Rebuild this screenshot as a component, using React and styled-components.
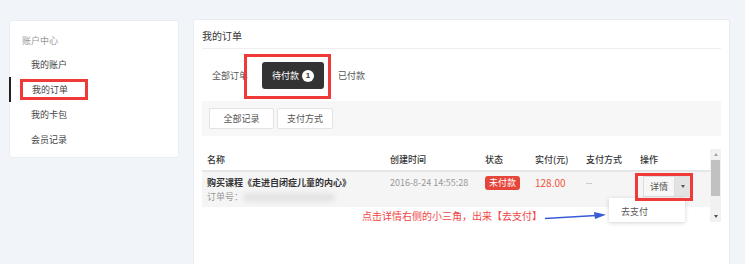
import React from "react";
import styled, { createGlobalStyle } from "styled-components";

const GlobalStyle = createGlobalStyle`
  html, body {
    margin: 0;
    padding: 0;
    background: #f1f4f8;
    overflow: hidden;
  }
  body {
    font-family: "Noto Sans CJK SC", "Liberation Sans", sans-serif;
    font-size: 9px;
    color: #555;
  }
`;

const Page = styled.div`
  display: flex;
  align-items: flex-start;
  gap: 14px;
  padding: 19px 0 0 9px;
  height: 264px;
  box-sizing: border-box;
  overflow: hidden;
`;

const Sidebar = styled.div`
  width: 170px;
  margin-top: 1px;
  padding-bottom: 5px;
  background: #fff;
  border: 1px solid #e9edf2;
  border-radius: 3px;
  box-sizing: border-box;
`;

const SideTitle = styled.div`
  padding: 10px 12px 0;
  height: 31px;
  line-height: 20px;
  color: #999;
  box-sizing: border-box;
`;

const SideItem = styled.div`
  position: relative;
  height: 25px;
  line-height: 25px;
  padding-left: ${(p) => (p.active ? "21px" : "22px")};
  border-left: ${(p) => (p.active ? "2px solid #222" : "none")};
  margin-left: -1px;
  color: #444;
`;

const Annot = styled.span`
  position: absolute;
  left: ${(p) => p.l}px;
  top: ${(p) => p.t}px;
  width: ${(p) => p.w}px;
  height: ${(p) => p.h}px;
  border: 3px solid #f03a3a;
  box-sizing: border-box;
  pointer-events: none;
  z-index: 5;
`;

const Main = styled.div`
  width: 537px;
  height: 245px;
  background: #fff;
  border: 1px solid #e9edf2;
  border-bottom: none;
  border-radius: 3px 3px 0 0;
  box-sizing: border-box;
  padding: 0 8px;
`;

const MainTitle = styled.div`
  padding: 8px 0 5px;
  line-height: 15px;
  font-size: 10px;
  color: #333;
  border-bottom: 1px solid #eee;
`;

const Tabs = styled.div`
  position: relative;
  display: flex;
  gap: 4px;
  margin: 13px 0 12px;
`;

const Tab = styled.div`
  display: flex;
  align-items: center;
  gap: 3px;
  height: 27px;
  padding: 0 10px;
  border-radius: 3px;
  background: ${(p) => (p.active ? "#333" : "transparent")};
  color: ${(p) => (p.active ? "#fff" : "#555")};
`;

const Count = styled.span`
  display: inline-flex;
  align-items: center;
  justify-content: center;
  width: 12px;
  height: 12px;
  border-radius: 50%;
  background: #fff;
  color: #333;
  font-size: 8px;
  font-weight: bold;
  font-family: "Liberation Sans", sans-serif;
`;

const FilterBar = styled.div`
  display: flex;
  gap: 3px;
  padding: 7px;
  background: #f7f7f7;
`;

const FilterBtn = styled.div`
  width: ${(p) => p.w}px;
  height: 21px;
  line-height: 20px;
  text-align: center;
  background: #fff;
  border: 1px solid #e3e3e3;
  border-radius: 2px;
  box-sizing: border-box;
  color: #555;
`;

const TableWrap = styled.div`
  position: relative;
  display: flex;
  margin-top: 13px;
  height: 73px;
`;

const Table = styled.div`
  flex: 1;
  overflow: hidden;
`;

const Row = styled.div`
  display: grid;
  grid-template-columns: 183px 95px 50px 51px 54px 1fr;
  align-items: ${(p) => (p.head ? "center" : "start")};
  height: ${(p) => (p.head ? "23px" : "35px")};
  padding: ${(p) => (p.head ? "0" : "5px 0 4px")};
  box-sizing: border-box;
  background: ${(p) => (p.head ? "#fff" : "#f5f5f5")};
  border-bottom: ${(p) => (p.head ? "2px solid #e6e6e6" : "none")};
  color: ${(p) => (p.head ? "#333" : "#555")};
  font-weight: ${(p) => (p.head ? "500" : "normal")};
`;

const Cell = styled.div`
  padding-left: 5px;
  line-height: 12px;
  color: ${(p) => p.color || "inherit"};
  font-size: ${(p) => p.size || "9px"};
`;

const Name = styled.div`
  font-weight: bold;
  color: #333;
`;

const OrderNo = styled.div`
  display: flex;
  align-items: center;
  margin-top: 2px;
  color: #999;
`;

const Blur = styled.span`
  display: inline-block;
  width: 92px;
  height: 9px;
  border-radius: 5px;
  background: #e4e4e4;
  filter: blur(2px);
`;

const Status = styled.span`
  display: inline-block;
  padding: 0 4px;
  height: 14px;
  line-height: 14px;
  margin-top: -1px;
  background: #e5453b;
  color: #fff;
  border-radius: 3px;
`;

const Split = styled.div`
  display: flex;
  margin: -1px 0 0 3px;
  height: 19px;
  border: 1px solid #ddd;
  width: fit-content;
`;

const SplitMain = styled.div`
  width: 30px;
  line-height: 19px;
  text-align: center;
  background: #f7f7f7;
  color: #555;
`;

const SplitArrow = styled.div`
  width: 15px;
  display: flex;
  align-items: center;
  justify-content: center;
  background: #e3e3e3;
  border-left: 1px solid #ddd;
`;

const Caret = styled.span`
  width: 0;
  height: 0;
  border-left: 2.5px solid transparent;
  border-right: 2.5px solid transparent;
  border-top: 3px solid #555;
`;

const Menu = styled.div`
  position: absolute;
  left: 407px;
  top: 49px;
  width: 76px;
  height: 24px;
  padding: 7px 0 0 12px;
  box-sizing: border-box;
  background: #fff;
  box-shadow: 0 1px 4px rgba(0, 0, 0, 0.18);
  color: #555;
  z-index: 3;
`;

const Note = styled.div`
  position: absolute;
  left: 160px;
  top: 61px;
  display: flex;
  align-items: center;
  gap: 2px;
  color: #f04545;
  font-size: 10px;
  line-height: 12px;
  z-index: 4;
`;

const Scrollbar = styled.div`
  display: flex;
  flex-direction: column;
  align-items: center;
  width: 11px;
  background: #f1f1f1;
`;

const ScrollArrow = styled.span`
  width: 0;
  height: 0;
  margin: 4px 0;
  border-left: 2.5px solid transparent;
  border-right: 2.5px solid transparent;
  ${(p) =>
    p.up ? "border-bottom: 3px solid #a3a3a3;" : "border-top: 3px solid #505050;"}
`;

const Thumb = styled.div`
  width: 9px;
  height: 36px;
  background: #c1c1c1;
`;

const Spacer = styled.div`
  flex: 1;
`;

export default function App() {
  return (
    <>
      <GlobalStyle />
      <Page>
        <Sidebar>
          <SideTitle>账户中心</SideTitle>
          <SideItem>我的账户</SideItem>
          <SideItem active>
            我的订单
            <Annot l={9} t={2} w={68} h={21} />
          </SideItem>
          <SideItem>我的卡包</SideItem>
          <SideItem>会员记录</SideItem>
        </Sidebar>
        <Main>
          <MainTitle>我的订单</MainTitle>
          <Tabs>
            <Tab>全部订单</Tab>
            <Tab active>
              待付款<Count>1</Count>
            </Tab>
            <Tab>已付款</Tab>
            <Annot l={42} t={-8} w={87} h={45} />
          </Tabs>
          <FilterBar>
            <FilterBtn w={65}>全部记录</FilterBtn>
            <FilterBtn w={56}>支付方式</FilterBtn>
          </FilterBar>
          <TableWrap>
            <Table>
              <Row head>
                <Cell>名称</Cell>
                <Cell>创建时间</Cell>
                <Cell>状态</Cell>
                <Cell>实付(元)</Cell>
                <Cell>支付方式</Cell>
                <Cell>操作</Cell>
              </Row>
              <Row>
                <Cell>
                  <Name>购买课程《走进自闭症儿童的内心》</Name>
                  <OrderNo>
                    订单号：<Blur />
                  </OrderNo>
                </Cell>
                <Cell color="#999">2016-8-24 14:55:28</Cell>
                <Cell>
                  <Status>未付款</Status>
                </Cell>
                <Cell color="#f2553a" size="10px">
                  128.00
                </Cell>
                <Cell color="#aaa">--</Cell>
                <Cell>
                  <Split>
                    <SplitMain>详情</SplitMain>
                    <SplitArrow>
                      <Caret />
                    </SplitArrow>
                  </Split>
                </Cell>
              </Row>
            </Table>
            <Scrollbar>
              <ScrollArrow up />
              <Thumb />
              <Spacer />
              <ScrollArrow />
            </Scrollbar>
            <Menu>去支付</Menu>
            <Note>
              点击详情右侧的小三角，出来【去支付】
              <svg width="64" height="12" viewBox="0 0 64 12">
                <path d="M1 8.5 L52 5.5" stroke="#3a5bd8" strokeWidth="1.6" fill="none" />
                <path d="M50 2 L62 4.8 L51 9 Z" fill="#3a5bd8" />
              </svg>
            </Note>
            <Annot l={433} t={24} w={58} h={28} />
          </TableWrap>
        </Main>
      </Page>
    </>
  );
}
